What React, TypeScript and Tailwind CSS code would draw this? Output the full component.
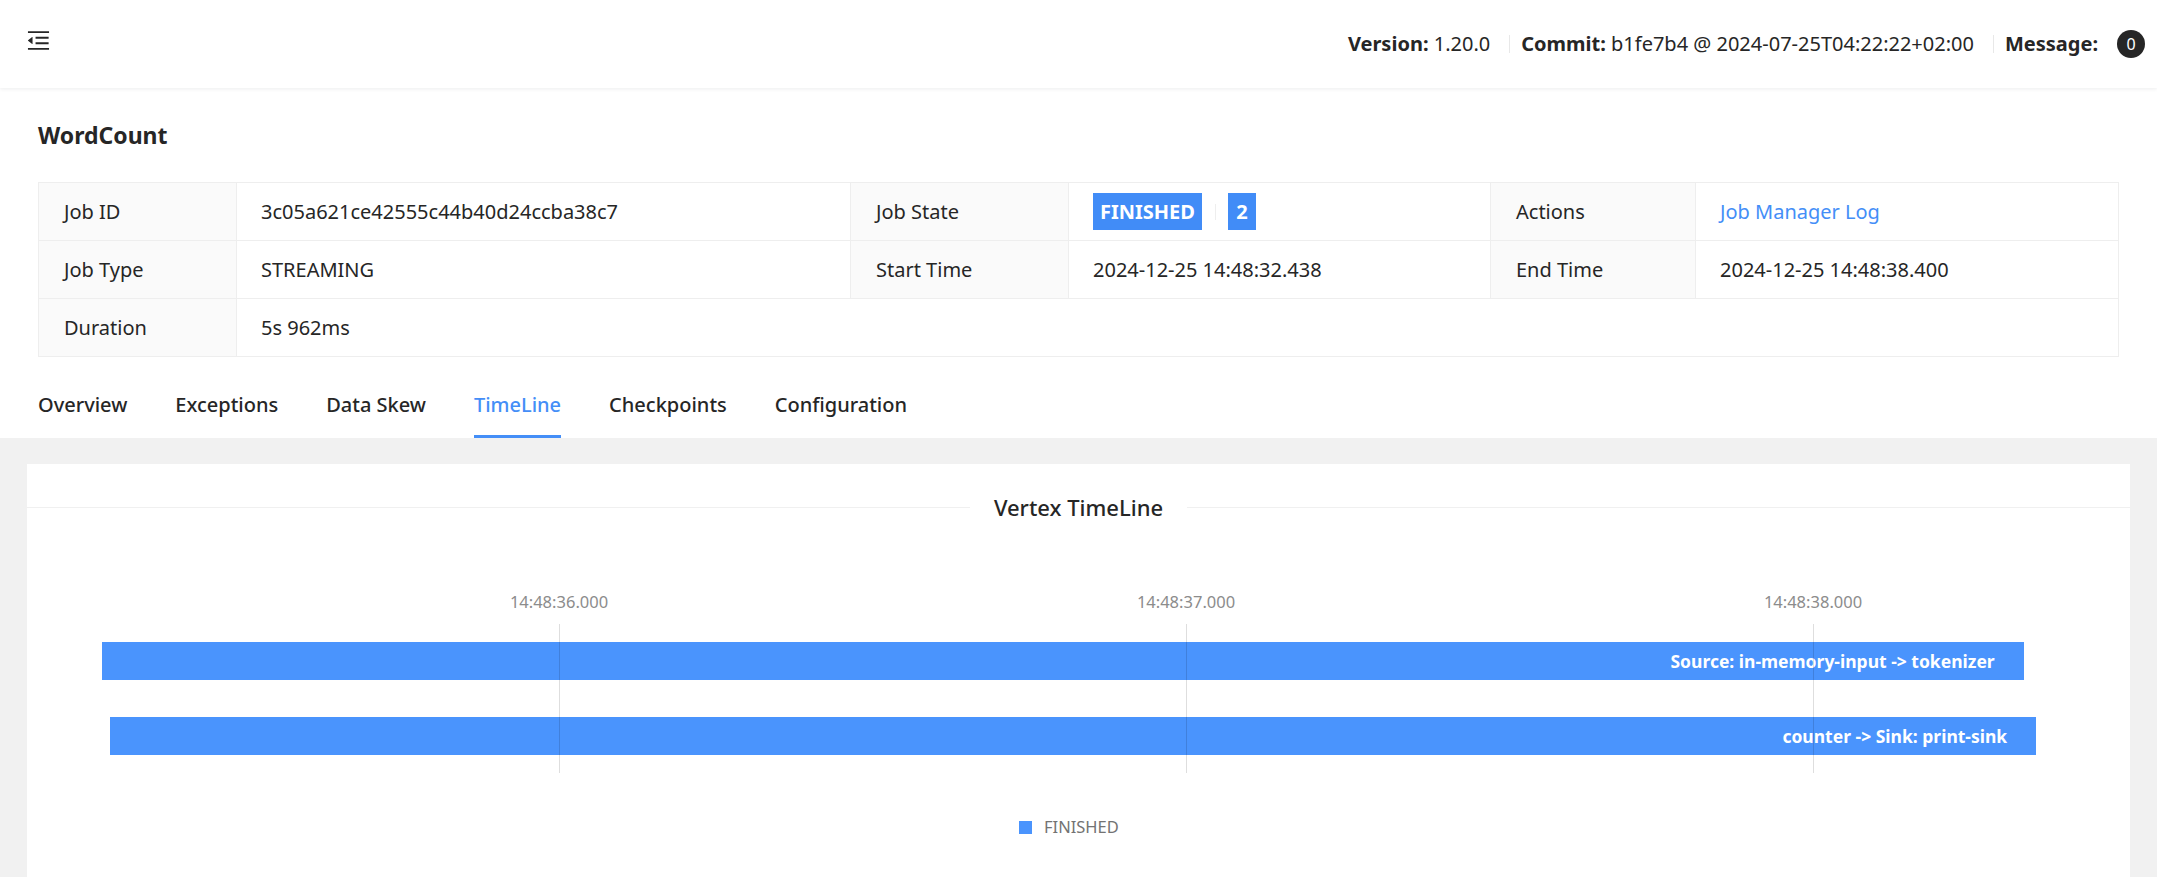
import { AiOutlineMenuFold } from "react-icons/ai";

interface Vertex {
  name: string;
  start: number; // seconds after 14:48:00
  end: number;
}

const vertices: Vertex[] = [
  { name: "Source: in-memory-input -> tokenizer", start: 35.271, end: 38.336 },
  { name: "counter -> Sink: print-sink", start: 35.284, end: 38.356 },
];

const ticks = [36, 37, 38];
const PX_PER_SEC = 627;
const ORIGIN_X = 532; // x of 14:48:36.000 inside the card

const xOf = (t: number) => ORIGIN_X + (t - 36) * PX_PER_SEC;

const tabs = ["Overview", "Exceptions", "Data Skew", "TimeLine", "Checkpoints", "Configuration"];

function Label({ children }: { children: React.ReactNode }) {
  return (
    <div className="flex h-[58px] items-center border-r border-b border-[#eeeeee] bg-[#fafafa] px-[25px]">
      {children}
    </div>
  );
}

function Value({ children, wide }: { children: React.ReactNode; wide?: boolean }) {
  return (
    <div
      className={`flex h-[58px] items-center border-r border-b border-[#eeeeee] px-[24px] ${wide ? "col-span-5" : ""}`}
    >
      {children}
    </div>
  );
}

function Sep() {
  return <span className="mr-[11px] ml-[19px] h-[18px] w-px bg-[#e8e8e8]" />;
}

export default function App() {
  return (
    <div className="min-h-screen bg-[#f1f1f1] font-['Noto_Sans',sans-serif] text-[#262626]">
      {/* Header */}
      <header className="relative z-10 flex h-[88px] items-center justify-between bg-white pr-[12px] pl-[25px] shadow-[0_1px_4px_rgba(0,21,41,0.08)]">
        <AiOutlineMenuFold className="mb-[8px] text-[27px] text-[#262626]" />
        <div className="flex items-center text-[20px]">
          <span>
            <b className="font-bold">Version:</b> 1.20.0
          </span>
          <Sep />
          <span>
            <b className="font-bold">Commit:</b> b1fe7b4 @ 2024-07-25T04:22:22+02:00
          </span>
          <Sep />
          <span className="font-bold">Message:</span>
          <span className="ml-[19px] flex h-[28px] min-w-[28px] items-center justify-center rounded-full bg-[#262626] px-[8px] text-[16px] text-white">
            0
          </span>
        </div>
      </header>

      {/* Job summary */}
      <section className="bg-white px-[38px] pt-[32px]">
        <h1 className="text-[23px] leading-[30px] font-bold">WordCount</h1>

        <div className="mt-[32px] grid grid-cols-[198px_614px_218px_422px_205px_1fr] border-t border-l border-[#eeeeee] text-[20px]">
          <Label>Job ID</Label>
          <Value>3c05a621ce42555c44b40d24ccba38c7</Value>
          <Label>Job State</Label>
          <Value>
            <span className="flex h-[37px] items-center bg-[#418cf7] px-[7px] font-bold text-white">FINISHED</span>
            <span className="mr-[12px] ml-[13px] h-[16px] w-px bg-[#eeeeee]" />
            <span className="flex h-[37px] w-[28px] items-center justify-center bg-[#418cf7] font-bold text-white">2</span>
          </Value>
          <Label>Actions</Label>
          <Value>
            <a className="text-[#448ef7]">Job Manager Log</a>
          </Value>

          <Label>Job Type</Label>
          <Value>STREAMING</Value>
          <Label>Start Time</Label>
          <Value>2024-12-25 14:48:32.438</Value>
          <Label>End Time</Label>
          <Value>2024-12-25 14:48:38.400</Value>

          <Label>Duration</Label>
          <Value wide>5s 962ms</Value>
        </div>

        {/* Tabs */}
        <nav className="mt-[15px] flex h-[66px] gap-[48px] text-[20px] font-medium">
          {tabs.map((tab) => (
            <div
              key={tab}
              className={`relative flex items-center ${tab === "TimeLine" ? "text-[#448ef7]" : ""}`}
            >
              {tab}
              {tab === "TimeLine" && (
                <span className="absolute right-0 bottom-0 left-0 h-[3px] bg-[#448ef7]" />
              )}
            </div>
          ))}
        </nav>
      </section>

      {/* Timeline card */}
      <main className="px-[27px] pt-[26px]">
        <div className="h-[413px] bg-white pt-[28px]">
          <div className="flex h-[30px] items-center">
            <span className="h-px flex-1 bg-[#f0f0f0]" />
            <span className="px-[24px] text-[22px] leading-[30px] font-medium">Vertex TimeLine</span>
            <span className="h-px flex-1 bg-[#f0f0f0]" />
          </div>

          <div className="relative h-[355px]">
            {ticks.map((t) => (
              <span
                key={`label-${t}`}
                className="absolute top-[68px] -translate-x-1/2 text-[16.5px] leading-[24px] text-[#8c8c8c]"
                style={{ left: xOf(t) }}
              >
                14:48:{t}.000
              </span>
            ))}

            {vertices.map((v, i) => (
              <div
                key={v.name}
                className="absolute flex h-[38px] items-center justify-end bg-[#4a94fd] pr-[29px] text-[17.5px] font-bold text-white"
                style={{ top: 120 + i * 75, left: xOf(v.start), width: (v.end - v.start) * PX_PER_SEC }}
              >
                {v.name}
              </div>
            ))}

            {ticks.map((t) => (
              <span
                key={`grid-${t}`}
                className="absolute top-[102px] h-[149px] w-px bg-black/[0.13]"
                style={{ left: xOf(t) }}
              />
            ))}

            {/* Legend */}
            <div className="absolute top-[293px] left-[992px] flex items-center gap-[12px] text-[16.5px] leading-[24px] text-[#737373]">
              <span className="h-[13px] w-[13px] bg-[#4a94fd]" />
              FINISHED
            </div>
          </div>
        </div>
      </main>
    </div>
  );
}
